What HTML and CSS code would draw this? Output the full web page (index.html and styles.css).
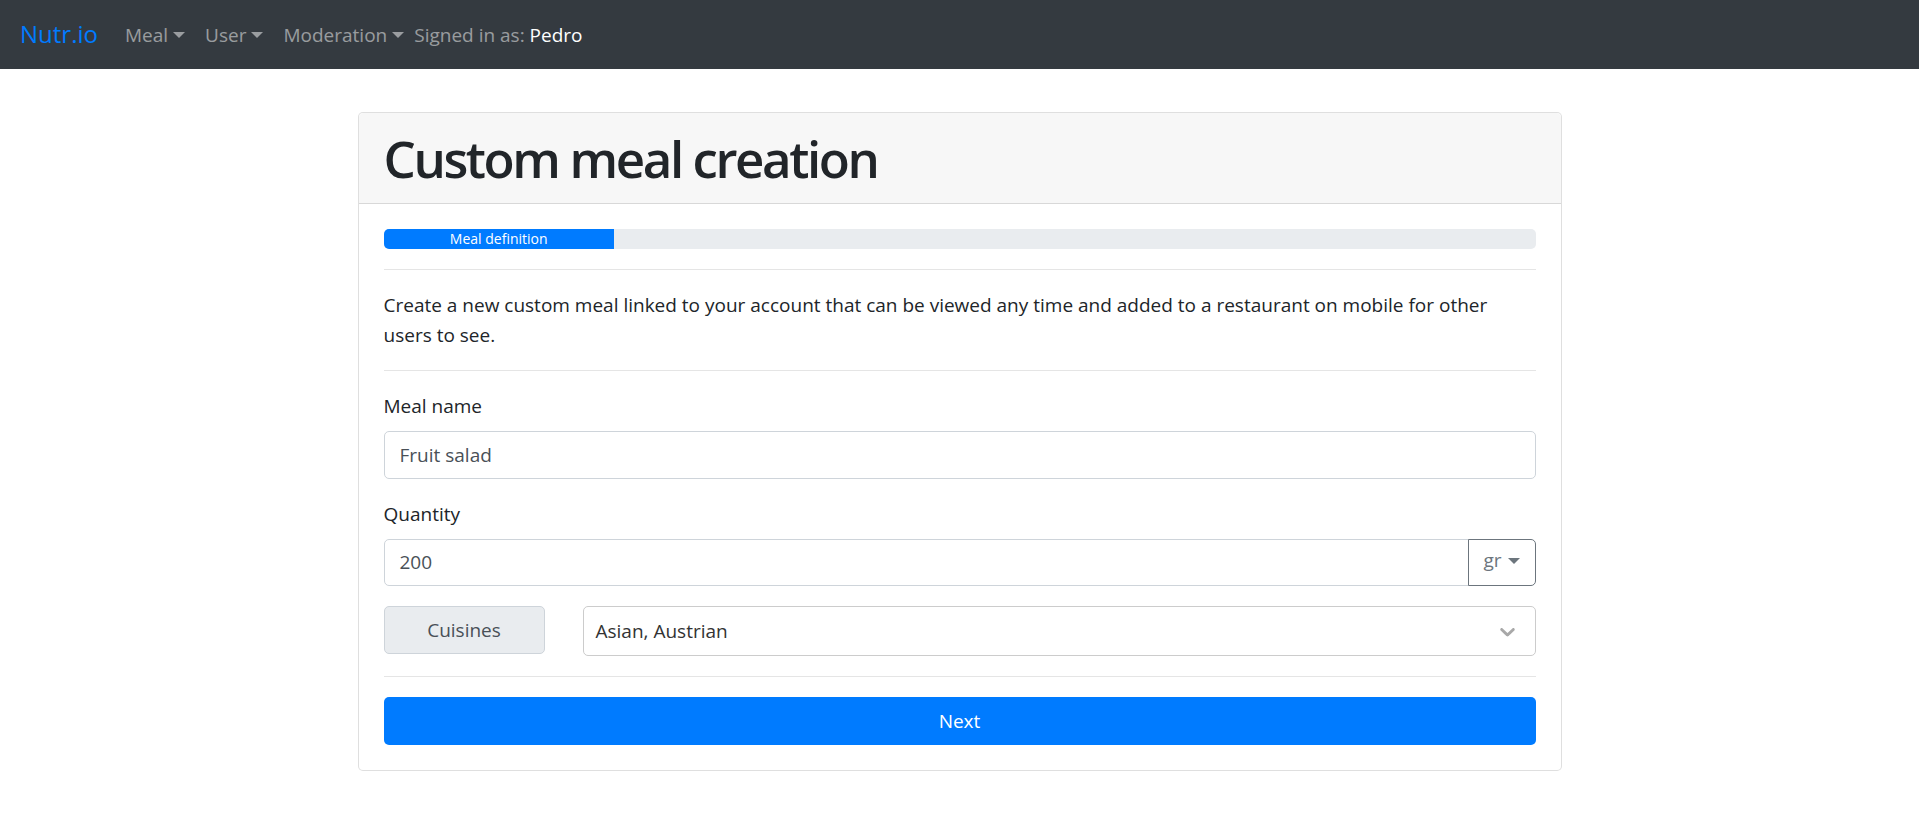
FILE: index.html
```html
<!DOCTYPE html>
<html lang="en">
<head>
<meta charset="utf-8">
<title>Nutr.io - Custom meal creation</title>
<link rel="stylesheet" href="styles.css">
</head>
<body>
<nav class="navbar">
  <a class="brand" href="#">Nutr.io</a>
  <ul class="nav">
    <li><a class="nav-link caret" href="#">Meal</a></li>
    <li><a class="nav-link caret" href="#">User</a></li>
    <li><a class="nav-link caret" href="#">Moderation</a></li>
  </ul>
  <span class="navbar-text">Signed in as: <span class="user">Pedro</span></span>
</nav>

<main class="page">
  <section class="card">
    <header class="card-header">
      <h1 class="title">Custom meal creation</h1>
    </header>
    <div class="card-body">
      <div class="progress"><div class="progress-bar" style="width: 20%">Meal definition</div></div>
      <hr class="divider">
      <p class="intro">Create a new custom meal linked to your account that can be viewed any time and added to a restaurant on mobile for other users to see.</p>
      <hr class="divider">
      <div class="form-group">
        <label class="label">Meal name</label>
        <div class="input">Fruit salad</div>
      </div>
      <div class="form-group">
        <label class="label">Quantity</label>
        <div class="input-group">
          <div class="input input-left">200</div>
          <button class="unit-btn"><span class="unit-text">gr</span><span class="unit-caret"></span></button>
        </div>
      </div>
      <div class="cuisine-row">
        <div class="cuisine-tag">Cuisines</div>
        <div class="select">
          <span class="select-value">Asian, Austrian</span>
          <svg class="chevron" viewBox="0 0 20 20" width="25" height="25" aria-hidden="true"><path d="M4.516 7.548c0.436-0.446 1.043-0.481 1.576 0l3.908 3.747 3.908-3.747c0.533-0.481 1.141-0.446 1.574 0 0.436 0.445 0.408 1.197 0 1.615-0.406 0.418-4.695 4.502-4.695 4.502-0.217 0.223-0.502 0.335-0.787 0.335s-0.57-0.112-0.789-0.335c0 0-4.287-4.084-4.695-4.502s-0.436-1.170 0-1.615z"/></svg>
        </div>
      </div>
      <hr class="divider">
      <button class="btn-primary">Next</button>
    </div>
  </section>
</main>
</body>
</html>
```

FILE: styles.css
```css
* { box-sizing: border-box; }

html, body {
  margin: 0;
  padding: 0;
  background: #fff;
  font-family: "Open Sans", "Noto Sans", sans-serif;
  font-size: 19px;
  color: #212529;
}

.navbar {
  height: 69px;
  background: #343a40;
  display: flex;
  align-items: center;
  padding: 0 20px;
}

.brand {
  color: #007bff;
  font-size: 24px;
  text-decoration: none;
  margin-right: 17px;
  line-height: 1;
  padding-bottom: 2px;
}

.nav {
  list-style: none;
  display: flex;
  margin: 0;
  padding: 0;
}

.nav-link {
  display: block;
  padding: 0 10px;
  color: rgba(255, 255, 255, 0.5);
  text-decoration: none;
  line-height: 30px;
}

.caret::after {
  content: "";
  display: inline-block;
  margin-left: 5px;
  vertical-align: 4px;
  border-top: 6px solid rgba(255, 255, 255, 0.5);
  border-left: 6px solid transparent;
  border-right: 6px solid transparent;
}

.navbar-text {
  color: rgba(255, 255, 255, 0.5);
  line-height: 30px;
}

.user { color: #fff; }

.page {
  padding-top: 43px;
}

.card {
  width: 1204px;
  margin: 0 auto;
  border: 1px solid rgba(0, 0, 0, 0.125);
  border-radius: 5px;
  background: #fff;
}

.card-header {
  background: #f7f7f7;
  border-bottom: 1px solid rgba(0, 0, 0, 0.125);
  padding: 15px 25px;
  border-radius: 5px 5px 0 0;
}

.title {
  margin: 0;
  font-size: 51px;
  line-height: 60px;
  font-weight: 600;
  letter-spacing: -2.4px;
  color: #212529;
}

.card-body {
  padding: 25px;
}

.progress {
  height: 20px;
  background: #e9ecef;
  border-radius: 5px;
  overflow: hidden;
  display: flex;
}

.progress-bar {
  background: #007bff;
  color: #fff;
  font-size: 14px;
  line-height: 20px;
  text-align: center;
}

.divider {
  border: 0;
  border-top: 1px solid rgba(0, 0, 0, 0.1);
  margin: 20px 0;
  height: 0;
}

.intro {
  margin: 0;
  line-height: 30px;
}

.form-group {
  margin-bottom: 20px;
}

.label {
  display: block;
  line-height: 30px;
  margin-bottom: 10px;
}

.input {
  height: 47.5px;
  border: 1px solid #ced4da;
  border-radius: 5px;
  padding: 0 15px;
  display: flex;
  align-items: center;
  color: #495057;
}

.input-group {
  display: flex;
}

.input-left {
  flex: 1;
  border-radius: 5px 0 0 5px;
}

.unit-btn {
  width: 68px;
  height: 47.5px;
  border: 1px solid #6c757d;
  border-radius: 0 5px 5px 0;
  background: #fff;
  color: #6c757d;
  font-family: inherit;
  font-size: 19px;
  padding: 0 0 0 15px;
  display: flex;
  align-items: center;
  overflow: hidden;
  margin-left: -1px;
}

.unit-text { line-height: 1; padding-bottom: 3px; }

.unit-caret {
  margin-left: 6px;
  border-top: 6px solid #6c757d;
  border-left: 6px solid transparent;
  border-right: 6px solid transparent;
  margin-bottom: 3px;
}

.cuisine-row {
  display: flex;
  align-items: flex-start;
  gap: 38px;
}

.cuisine-tag {
  width: 161px;
  height: 47.5px;
  background: #e9ecef;
  border: 1px solid #ced4da;
  border-radius: 5px;
  color: #495057;
  display: flex;
  align-items: center;
  justify-content: center;
}

.select {
  flex: 1;
  height: 50px;
  border: 1px solid #ccc;
  border-radius: 5px;
  display: flex;
  align-items: center;
  justify-content: space-between;
  padding: 0 15px 0 12px;
}

.select-value {
  color: #333;
}

.chevron {
  fill: #a8a8a8;
}

.btn-primary {
  display: block;
  width: 100%;
  height: 47.5px;
  border: 0;
  border-radius: 5px;
  background: #007bff;
  color: #fff;
  font-family: inherit;
  font-size: 19px;
}
```
